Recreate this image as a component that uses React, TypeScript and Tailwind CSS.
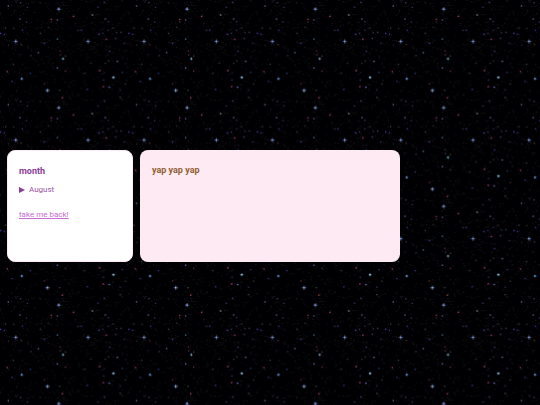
import React from "react";

type Star = [number, number, string, number];

const TILE_W = 385;
const TILE_H = 296;

// x, y, colour, size (3 = cross-shaped star)
const stars: Star[] = [
  [176, 27, "#9ab4ff", 3], [47, 124, "#98acff", 3], [264, 124, "#98acff", 3], [142, 271, "#9cc0ff", 3],
  [65, 236, "#74a4f0", 2], [189, 176, "#70b0d0", 2], [340, 232, "#a0d8ff", 2],
  [60, 57, "#5c68b0", 1], [172, 60, "#5c5ca0", 1], [154, 58, "#9c3c58", 1], [220, 49, "#b84464", 1],
  [277, 45, "#a09888", 1], [316, 57, "#5c68b0", 1], [25, 18, "#587898", 1], [172, 117, "#4878a0", 1],
  [319, 118, "#c03c70", 1], [115, 158, "#4c788c", 1], [172, 204, "#6c70bc", 1], [352, 184, "#6080a0", 1],
  [299, 212, "#c04470", 1], [22, 215, "#9c3c54", 1], [310, 260, "#c83c7c", 1], [328, 262, "#6478c8", 1],
  [187, 294, "#a84050", 1], [62, 8, "#3c3c78", 1], [82, 22, "#343468", 1], [313, 7, "#3c3c78", 1],
  [294, 22, "#343468", 1], [79, 66, "#343468", 1], [325, 65, "#343468", 1], [17, 84, "#4c3830", 1],
  [41, 85, "#302c2c", 1], [67, 91, "#3c3888", 1], [2, 100, "#503ca8", 1], [13, 103, "#443490", 1],
  [121, 100, "#503c2c", 1], [244, 91, "#3c3888", 1], [235, 91, "#302c50", 1], [297, 103, "#503ca8", 1],
  [309, 100, "#403474", 1], [325, 91, "#343064", 1], [64, 134, "#502c34", 1], [133, 130, "#3c4498", 1],
  [93, 167, "#343458", 1], [180, 153, "#582c30", 1], [181, 165, "#403044", 1], [196, 168, "#4c3c28", 1],
  [329, 154, "#403c88", 1], [273, 190, "#343434", 1], [316, 190, "#34343c", 1], [326, 183, "#3c3434", 1],
  [40, 193, "#384440", 1], [91, 220, "#303888", 1], [196, 213, "#602c40", 1], [254, 220, "#3c4038", 1],
  [36, 244, "#34348c", 1], [311, 240, "#383460", 1], [367, 217, "#343878", 1], [376, 252, "#443434", 1],
  [133, 251, "#642c30", 1], [179, 271, "#384444", 1], [262, 268, "#303c8c", 1], [361, 292, "#58403c", 1],
  [361, 270, "#2c2c54", 1], [347, 115, "#3c3c68", 1], [363, 97, "#3c3c68", 1], [373, 130, "#343464", 1],
  [350, 98, "#2c4048", 1], [340, 84, "#443028", 1], [154, 66, "#403828", 1], [145, 82, "#382c2c", 1],
];

const dustColors = ["#121216", "#181616", "#11111a", "#1a141c", "#101717", "#222022"];

// Deterministic faint dust between the brighter stars
const dust = (() => {
  let s = 77;
  const next = () => {
    s = (s * 16807) % 2147483647;
    return s / 2147483647;
  };
  return Array.from({ length: 420 }, () => ({
    x: Math.floor(next() * 128) * 3,
    y: Math.floor(next() * 98) * 3,
    c: dustColors[Math.floor(next() * dustColors.length)],
  }));
})();

function Starfield() {
  return (
    <svg className="absolute inset-0 -z-10 h-full w-full" aria-hidden="true">
      <defs>
        <pattern
          id="stars"
          width={TILE_W}
          height={TILE_H}
          patternUnits="userSpaceOnUse"
          patternTransform="scale(0.3333)"
        >
          <rect width={TILE_W} height={TILE_H} fill="#000002" />
          {dust.map((d, i) => (
            <rect key={i} x={d.x} y={d.y} width="3" height="3" fill={d.c} />
          ))}
          {stars.map(([x, y, c, size], i) => (
            <g key={i} fill={c}>
              {size === 3 && (
                <g opacity="0.5">
                  <rect x={x - 6} y={y - 1} width="13" height="3" />
                  <rect x={x - 1} y={y - 6} width="3" height="13" />
                </g>
              )}
              {size === 2 && (
                <g opacity="0.5">
                  <rect x={x - 4} y={y - 1} width="9" height="3" />
                  <rect x={x - 1} y={y - 4} width="3" height="9" />
                </g>
              )}
              <rect x={x - 2} y={y - 2} width="4" height="4" />
            </g>
          ))}
        </pattern>
      </defs>
      <rect width="100%" height="100%" fill="url(#stars)" />
    </svg>
  );
}

export default function App() {
  return (
    <div className="relative isolate flex min-h-screen items-center overflow-hidden bg-black pt-[7px] pr-[9px] pl-[7px] font-['Roboto','Liberation_Sans',sans-serif]">
      <Starfield />
      <div className="grid h-28 w-3/4 grid-cols-[126px_1fr] gap-[7px]">
        <aside className="rounded-lg border border-[#feeaf2] bg-white px-[11px] py-3">
          <h2 className="text-[9px] leading-4 font-bold text-[#8b3d96]">month</h2>
          <details className="mt-[5px] text-[8px] leading-3 text-[#9a55a4]">
            <summary className="flex cursor-pointer list-none items-center gap-1">
              <svg className="h-[6px] w-[6px] fill-[#8b3d96]" viewBox="0 0 6 6" aria-hidden="true">
                <path d="M0 0L6 3L0 6Z" />
              </svg>
              August
            </summary>
          </details>
          <p className="mt-[13px] text-[8px] leading-3">
            <a href="#back" className="text-[#c66bd0] underline">take me back!</a>
          </p>
        </aside>
        <main className="rounded-lg bg-[#feeaf2] p-3">
          <h2 className="text-[9px] leading-4 font-bold text-[#906035]">yap yap yap</h2>
        </main>
      </div>
    </div>
  );
}
